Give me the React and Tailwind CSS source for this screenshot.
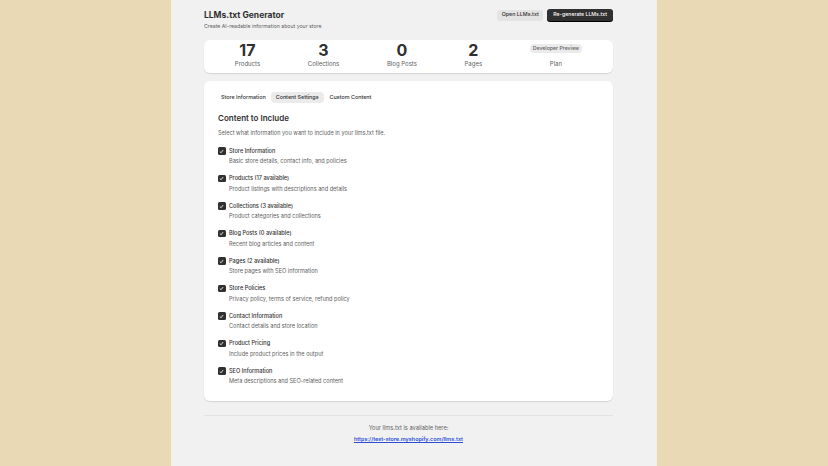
import React from "react";

const items = [
  ["Store Information", "Basic store details, contact info, and policies"],
  ["Products (17 available)", "Product listings with descriptions and details"],
  ["Collections (3 available)", "Product categories and collections"],
  ["Blog Posts (0 available)", "Recent blog articles and content"],
  ["Pages (2 available)", "Store pages with SEO information"],
  ["Store Policies", "Privacy policy, terms of service, refund policy"],
  ["Contact Information", "Contact details and store location"],
  ["Product Pricing", "Include product prices in the output"],
  ["SEO Information", "Meta descriptions and SEO-related content"],
];

function Check() {
  return (
    <div className="w-[7.5px] h-[7.5px] rounded-[1.5px] bg-[#303030] flex items-center justify-center shrink-0">
      <svg width="5" height="5" viewBox="0 0 10 10" fill="none">
        <path d="M2.2 5.6 L4.2 7.5 L7.8 2.6" stroke="white" strokeWidth="1.6" strokeLinecap="round" strokeLinejoin="round" />
      </svg>
    </div>
  );
}

function Stat({ n, label }) {
  return (
    <div className="flex flex-col items-center">
      <div className="text-[16px] leading-[15px] font-bold text-[#303030]">{n}</div>
      <div className="text-[6px] leading-[8px] mt-[2px] text-[#616161]">{label}</div>
    </div>
  );
}

export default function App() {
  return (
    <div className="w-[828px] h-[466px] bg-[#ead9b5] flex justify-center overflow-hidden" style={{ fontFamily: "Inter, 'Liberation Sans', sans-serif" }}>
      <div className="w-[486px] h-full bg-[#f1f1f1] border-x border-[#f6efe0] pl-[32px] pr-[43px] flex flex-col">
        <div className="flex justify-between items-start pt-[9px]">
          <div className="flex flex-col">
            <div className="text-[8.5px] leading-[12px] font-bold text-[#303030]">LLMs.txt Generator</div>
            <div className="text-[5.2px] leading-[8px] mt-[1px] text-[#616161]">Create AI-readable information about your store</div>
          </div>
          <div className="flex gap-[4px] items-center">
            <div className="h-[11px] px-[4.5px] rounded-[3px] bg-[#e3e3e3] text-[5.3px] font-medium text-[#303030] flex items-center">Open LLMs.txt</div>
            <div className="h-[12px] px-[6px] rounded-[3px] bg-[#303030] text-[5.2px] font-medium text-white flex items-center shadow-[0_1px_0_#000]">Re-generate LLMs.txt</div>
          </div>
        </div>

        <div className="mt-[10px] h-[33px] bg-white rounded-[6px] shadow-[0_1px_1px_rgba(0,0,0,0.12)] flex items-start justify-around px-[7px] pt-[3px]">
          <Stat n="17" label="Products" />
          <Stat n="3" label="Collections" />
          <Stat n="0" label="Blog Posts" />
          <Stat n="2" label="Pages" />
          <div className="flex flex-col items-center">
            <div className="mt-[1px] h-[9px] px-[3px] rounded-[4px] bg-[#ebebeb] text-[5.2px] text-[#616161] font-medium flex items-center">Developer Preview</div>
            <div className="text-[6px] leading-[8px] mt-[7px] text-[#616161]">Plan</div>
          </div>
        </div>

        <div className="mt-[8px] bg-white rounded-[6px] shadow-[0_1px_1px_rgba(0,0,0,0.12)] pt-[11px] pb-[15px] px-[14px]">
          <div className="flex gap-[2px] items-center">
            <div className="h-[11px] px-[3px] text-[5.4px] font-medium text-[#303030] flex items-center">Store Information</div>
            <div className="h-[11px] px-[5px] rounded-[4px] bg-[#ebebeb] text-[5.4px] font-medium text-[#303030] flex items-center">Content Settings</div>
            <div className="h-[11px] px-[4px] text-[5.4px] font-medium text-[#303030] flex items-center">Custom Content</div>
          </div>
          <div className="mt-[9px] text-[8px] leading-[12px] font-semibold text-[#303030]">Content to Include</div>
          <div className="mt-[5px] text-[5.6px] leading-[8px] text-[#616161]">Select what information you want to include in your llms.txt file.</div>
          <div className="mt-[9px] flex flex-col gap-[7.5px]">
            {items.map(([t, d]) => (
              <div key={t} className="flex flex-col">
                <div className="flex items-center gap-[3.5px] h-[10px]">
                  <Check />
                  <div className="text-[5.6px] font-medium text-[#303030]">{t}</div>
                </div>
                <div className="pl-[11px] h-[10px] text-[5.6px] leading-[10px] text-[#616161]">{d}</div>
              </div>
            ))}
          </div>
        </div>

        <div className="mt-[14px] border-t border-[#e3e3e3]"></div>
        <div className="mt-[8px] text-center text-[5.7px] leading-[8px] text-[#616161]">Your llms.txt is available here:</div>
        <div className="mt-[3px] text-center text-[5.45px] leading-[8px]">
          <span className="text-[#2c4fd6] underline font-semibold">https://test-store.myshopify.com/llms.txt</span>
        </div>
      </div>
    </div>
  );
}
